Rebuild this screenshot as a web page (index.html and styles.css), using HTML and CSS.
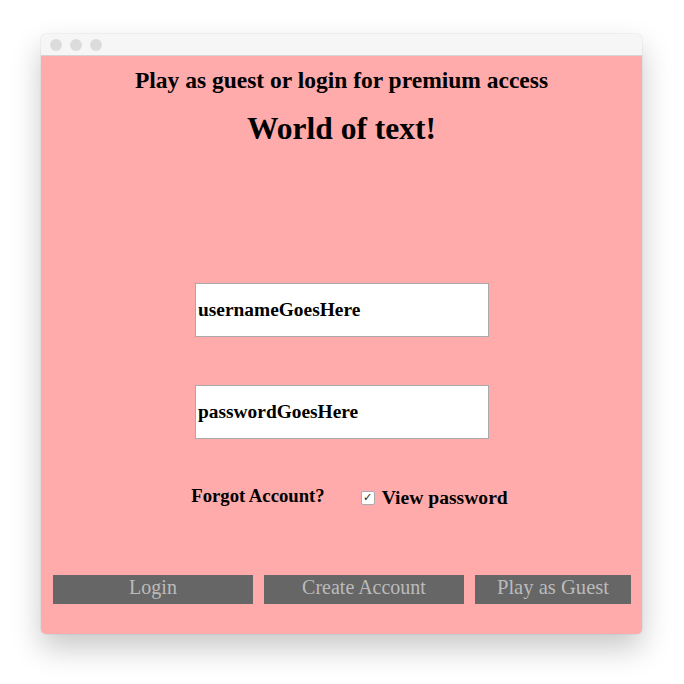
FILE: index.html
```html
<!DOCTYPE html>
<html>
<head>
<meta charset="utf-8">
<link rel="stylesheet" href="styles.css">
</head>
<body>
<div class="window">
  <div class="titlebar">
    <span class="dot"></span><span class="dot"></span><span class="dot"></span>
  </div>
  <div class="content">
    <div class="subtitle">Play as guest or login for premium access</div>
    <div class="title">World of text!</div>
    <div class="fields">
      <div class="field">usernameGoesHere</div>
      <div class="field">passwordGoesHere</div>
    </div>
    <div class="options">
      <span class="forgot">Forgot Account?</span>
      <label class="view"><span class="check">&#10003;</span>View password</label>
    </div>
    <div class="buttons">
      <div class="btn btn-login">Login</div>
      <div class="btn btn-create">Create Account</div>
      <div class="btn btn-guest">Play as Guest</div>
    </div>
  </div>
</div>
</body>
</html>
```
FILE: styles.css
```css
html, body {
  margin: 0;
  padding: 0;
  background: #ffffff;
}
body {
  width: 684px;
  height: 684px;
  font-family: "Liberation Serif", serif;
  color: #000;
}
.window {
  margin: 34px 0 0 41px;
  width: 601px;
  height: 600px;
  display: flex;
  flex-direction: column;
  border-radius: 5px;
  overflow: hidden;
  box-shadow: 0 0 1px rgba(0,0,0,0.35), 0 14px 30px rgba(0,0,0,0.22);
}
.titlebar {
  height: 21px;
  background: #f6f6f6;
  border-bottom: 1px solid #d4d4d4;
  display: flex;
  align-items: center;
  gap: 8px;
  padding-left: 9px;
  flex-shrink: 0;
}
.dot {
  width: 12px;
  height: 12px;
  border-radius: 50%;
  background: #dcdcdc;
}
.content {
  flex: 1;
  background: #ffabab;
  display: flex;
  flex-direction: column;
  align-items: center;
}
.subtitle {
  margin-top: 12px;
  font-size: 23.5px;
  font-weight: bold;
  line-height: 24px;
}
.title {
  margin-top: 21px;
  font-size: 31.5px;
  font-weight: bold;
  line-height: 32px;
}
.fields {
  margin-top: 138px;
  display: flex;
  flex-direction: column;
  gap: 48px;
  margin-left: 1px;
}
.field {
  width: 290px;
  height: 52px;
  background: #fff;
  border: 1px solid #aaa;
  display: flex;
  align-items: center;
  padding-left: 2px;
  box-sizing: content-box;
  font-size: 19.4px;
  font-weight: bold;
}
.options {
  margin-top: 48px;
  display: flex;
  align-items: flex-end;
  gap: 36px;
  margin-left: 16px;
}
.forgot {
  font-size: 18.7px;
  font-weight: bold;
  line-height: 22px;
  position: relative;
  top: -2px;
}
.view {
  font-size: 19.6px;
  font-weight: bold;
  line-height: 22px;
  display: flex;
  align-items: center;
  gap: 7px;
}
.check {
  width: 12px;
  height: 12px;
  border: 1px solid #aaa;
  border-radius: 2px;
  background: #fff;
  font-size: 11px;
  font-weight: bold;
  line-height: 12px;
  text-align: center;
  font-family: "DejaVu Sans", sans-serif;
  color: #222;
}
.buttons {
  margin-top: 66px;
  align-self: stretch;
  display: flex;
  gap: 11px;
  padding: 0 11px 0 12px;
}
.btn {
  height: 29px;
  background: #666666;
  color: #bbbbbb;
  font-size: 20px;
  line-height: 25px;
  text-align: center;
}
.btn-guest { font-size: 20.6px; }
.btn-login, .btn-create { width: 200px; }
.btn-guest { width: 156px; }
```
